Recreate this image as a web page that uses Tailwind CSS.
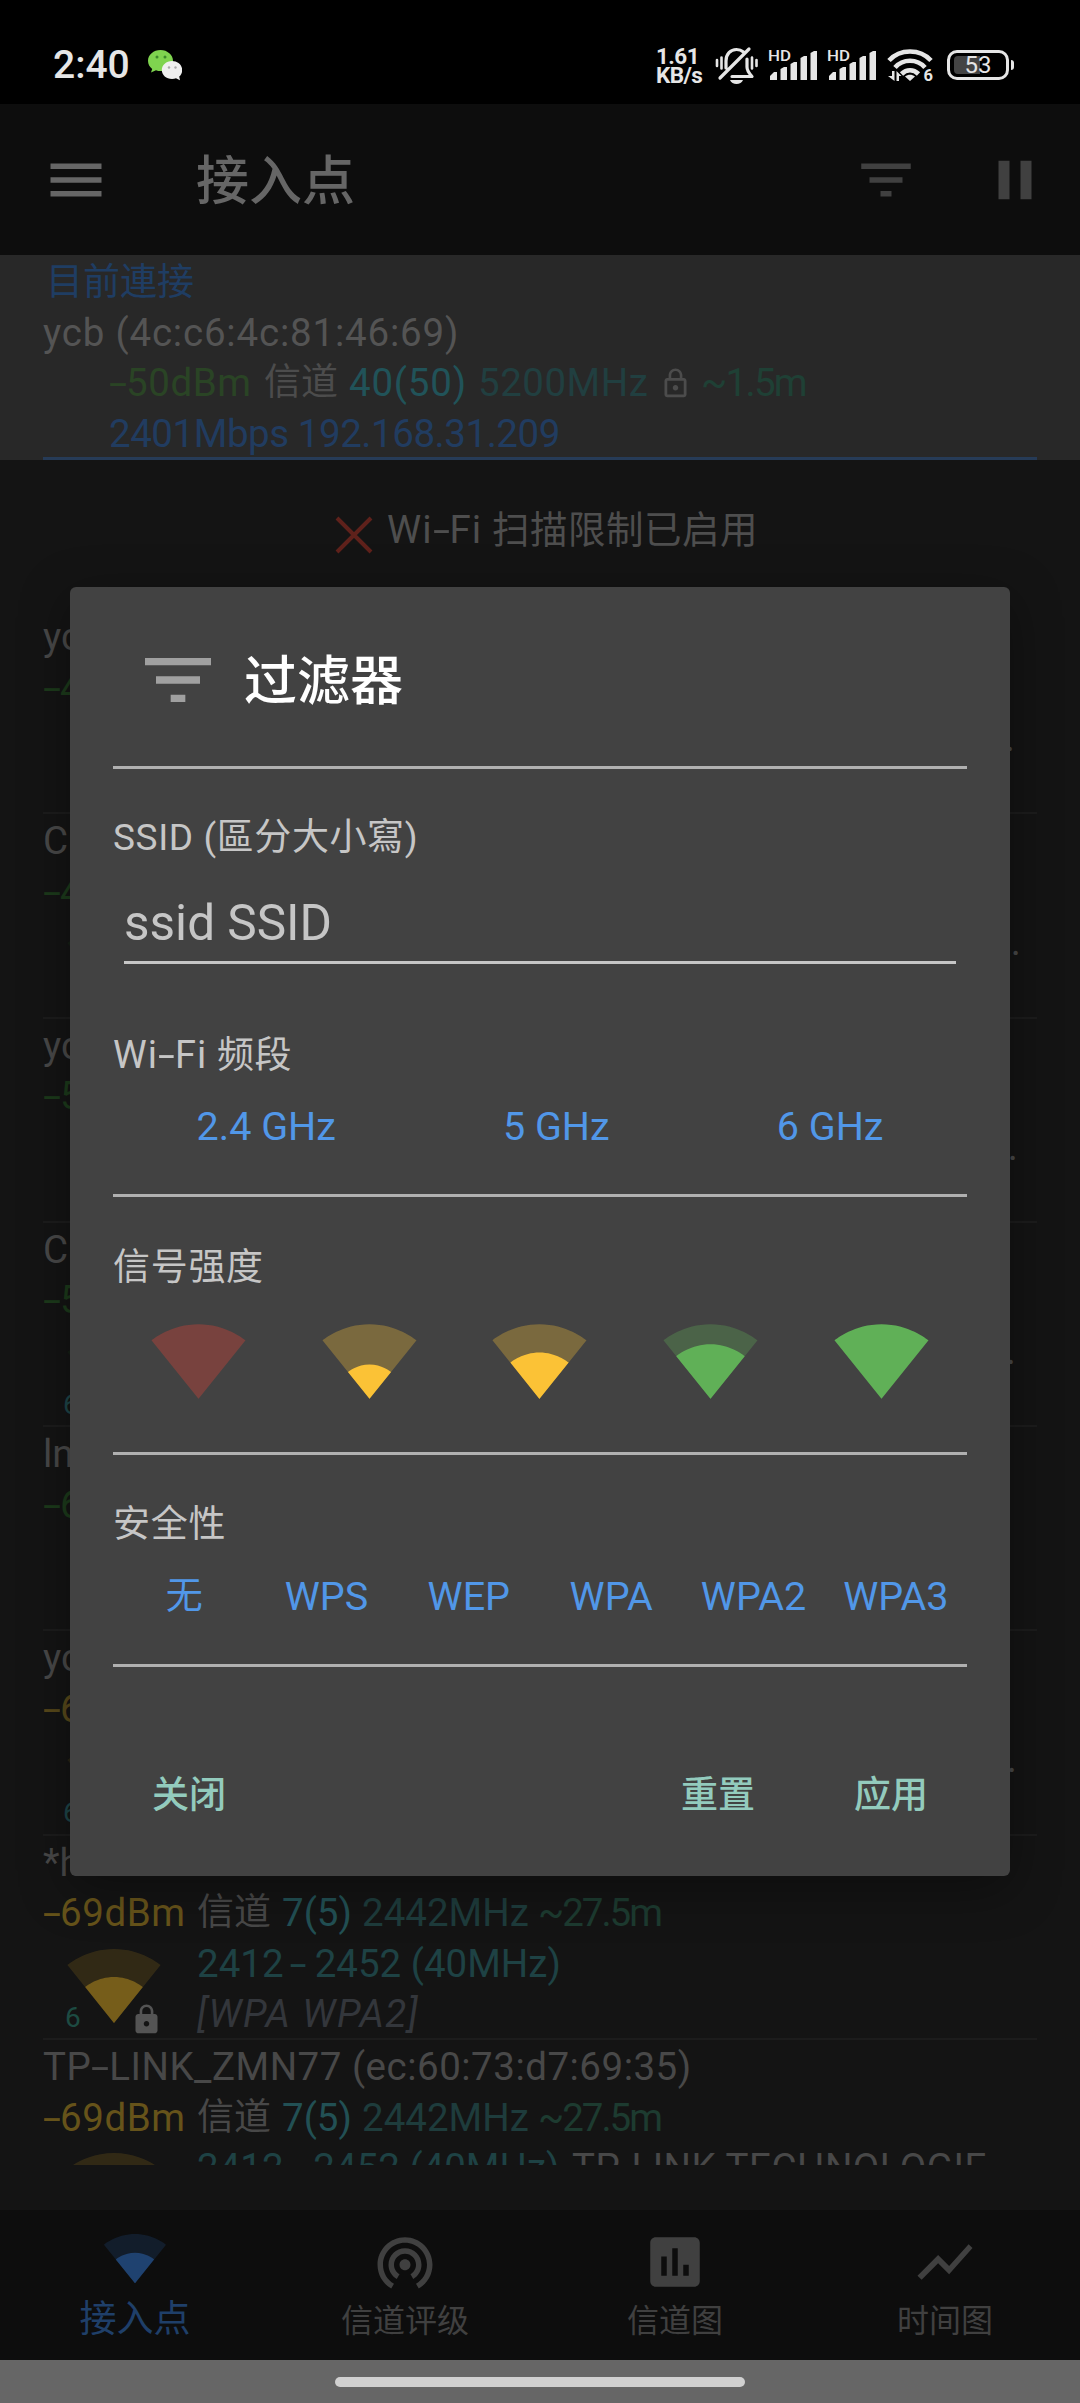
<!DOCTYPE html>
<html lang="zh">
<head>
    <meta charset="UTF-8">
    <meta name="viewport" content="width=device-width, initial-scale=1.0">
    <title>接入点</title>
    <script src="https://cdn.jsdelivr.net/npm/@tailwindcss/browser@4"></script>
</head>
<body class="bg-black">
    <!-- Shared icons -->
    <svg class="hidden">
        <symbol id="filter" viewBox="0 0 24 24"><path d="M10 18h4v-2h-4v2zM3 6v2h18V6H3zm3 7h12v-2H6v2z"/></symbol>
        <symbol id="wifi-full" viewBox="0 0 24 24"><path d="M12.01 21.49L23.64 7c-.45-.34-4.93-4-11.64-4C5.28 3 .81 6.66.36 7l11.63 14.49.01.01.01-.01z"/></symbol>
        <symbol id="wifi-1" viewBox="0 0 24 24"><path fill-opacity=".3" d="M12.01 21.49L23.64 7c-.45-.34-4.93-4-11.64-4C5.28 3 .81 6.66.36 7l11.63 14.49.01.01.01-.01z"/><path d="M6.67 14.86L12 21.49v.01l.01-.01 5.33-6.63C17.06 14.65 15.03 13 12 13s-5.06 1.65-5.33 1.86z"/></symbol>
        <symbol id="wifi-2" viewBox="0 0 24 24"><path fill-opacity=".3" d="M12.01 21.49L23.64 7c-.45-.34-4.93-4-11.64-4C5.28 3 .81 6.66.36 7l11.63 14.49.01.01.01-.01z"/><path d="M4.79 12.52l7.2 8.98H12l.01-.01 7.2-8.98C18.85 12.24 16.1 10 12 10s-6.85 2.24-7.21 2.52z"/></symbol>
        <symbol id="wifi-3" viewBox="0 0 24 24"><path fill-opacity=".3" d="M12.01 21.49L23.64 7c-.45-.34-4.93-4-11.64-4C5.28 3 .81 6.66.36 7l11.63 14.49.01.01.01-.01z"/><path d="M3.53 10.95l8.46 10.54.01.01.01-.01 8.46-10.54C20.04 10.62 16.81 8 12 8c-4.81 0-8.04 2.62-8.47 2.95z"/></symbol>
        <symbol id="lock" viewBox="0 0 24 24"><path d="M18 8h-1V6c0-2.76-2.24-5-5-5S7 3.24 7 6v2H6c-1.1 0-2 .9-2 2v10c0 1.1.9 2 2 2h12c1.1 0 2-.9 2-2V10c0-1.1-.9-2-2-2zm-6 9c-1.1 0-2-.9-2-2s.9-2 2-2 2 .9 2 2-.9 2-2 2zm3.1-9H8.9V6c0-1.71 1.39-3.1 3.1-3.1 1.71 0 3.1 1.39 3.1 3.1v2z"/></symbol>
        <symbol id="signal" viewBox="0 0 49 36">
            <text x="0" y="14" font-size="15.5" font-weight="500" textLength="23" lengthAdjust="spacingAndGlyphs">HD</text>
            <path d="M2 33v-4l4-4h3v8zM12.500 33V22l3.500-2h3v13zM22.500 33V17l3.500-2h3v18zM32.500 33V11l3.500-2h3v24zM42.500 33V6l3.500-2h3v29z"/>
        </symbol>
    </svg>

    <div class="relative flex flex-col w-[1080px] h-[2403px] overflow-hidden bg-[#141414] font-['Roboto','Noto_Sans_CJK_SC',sans-serif] text-[38.500px] leading-[50.5px] whitespace-nowrap">
        <!-- Status bar -->
        <div class="flex h-[104px] items-center bg-black pl-[53px] pr-[66px] pt-[25px] text-[#e6e6e6] fill-[#e6e6e6]">
            <span class="pt-[2px] text-[39px] font-medium">2:40</span>
            <svg class="ml-[18px] w-[34px] h-[32px]" viewBox="0 0 34 32">
                <path fill="#7fd44f" d="M12.500 1C5.600 1 0 5.800 0 11.700c0 3.500 1.700 6.300 4.200 8.200L3 23.500l5-2.200c1.500.6 3 .8 4.500.8C19.400 22.100 25 17.400 25 11.700S19.400 1 12.500 1z"/>
                <path fill="#efefef" d="M24 12c-5.700 0-10.200 4-10.200 9S18.300 30 24 30c1.500 0 2.900-.3 4-.8l4 2-.8-3.600c1.900-1.700 3-3.900 3-6.600 0-5-4.500-9-10.200-9z"/>
                <g fill="#3c8a2a"><circle cx="9" cy="8" r="1.500"/><circle cx="17" cy="8" r="1.500"/></g>
                <g fill="#aaa"><circle cx="21" cy="18.500" r="1.200"/><circle cx="27.500" cy="18.500" r="1.200"/></g>
            </svg>
            <div class="ml-auto flex items-center">
                <div class="w-[59px] pt-[3px] text-[22.500px] font-bold leading-[19px] tracking-tight">
                    <div>1.61</div>
                    <div>KB/s</div>
                </div>
                <svg class="w-[43px] h-[38px]" viewBox="0 0 43 38" fill="none" stroke="#e6e6e6" stroke-width="3.200" stroke-linecap="round" stroke-linejoin="round">
                    <path d="M34 3L5 32M11 22V15C11 8 15.500 3.500 21.500 3.500c3 0 5 .8 7 2.500M32 13v8c0 4 2 6 5 9.500H17"/>
                    <path stroke-width="2.600" d="M6.500 11.500v11M2 14v6M37 11.500v11M41.500 14v6"/>
                    <path fill="#e6e6e6" stroke="none" d="M15 34h13c-1 2.500-3.500 4-6.500 4S16 36.500 15 34z"/>
                </svg>
                <svg class="ml-[10px] w-[49px] h-[36px]"><use href="#signal"/></svg>
                <svg class="ml-[10px] w-[49px] h-[36px]"><use href="#signal"/></svg>
                <svg class="ml-[11px] w-[47px] h-[36px]" viewBox="0 0 47 36">
                    <g fill="none" stroke="#e6e6e6" stroke-width="4.600">
                        <path d="M2 13.500C13 1.500 33 1.500 44 13.500M8 20.500c8-9 22-9 30 0M14.500 27c5-5 12-5 17 0"/>
                    </g>
                    <path d="M23 34l-5-4.500c3-2.500 7-2.500 10 0zM5 24h2.500v10L1 29h4zM9.500 34V24l5 5H12v5z"/>
                    <text x="36.500" y="34" font-size="16.500" font-weight="700">6</text>
                </svg>
                <div class="ml-[13px] flex items-center">
                    <div class="relative flex w-[62px] h-[30px] items-center justify-center rounded-[10px] border-[3px] border-[#e6e6e6] text-[24px] leading-none">
                        <div class="absolute left-[4px] top-[3px] h-[18px] w-[26px] rounded-l-[4px] bg-[#444]"></div>
                        <span class="relative">53</span>
                    </div>
                    <div class="ml-[2px] w-[3px] h-[10px] rounded-r bg-[#e6e6e6]"></div>
                </div>
            </div>
        </div>

        <!-- Toolbar -->
        <div class="flex h-[151px] items-center bg-[#0d0d0d] pl-[42px] pr-8">
            <svg class="w-[68px] h-[66px] fill-[#666]" viewBox="0 0 24 24" preserveAspectRatio="none"><path d="M3 18h18v-2H3v2zm0-5h18v-2H3v2zm0-7v2h18V6H3z"/></svg>
            <h1 class="ml-[86px] pt-[5px] text-[53px] font-medium text-[#666]">接入点</h1>
            <svg class="ml-auto w-[66px] h-[66px] fill-[#404040]"><use href="#filter"/></svg>
            <svg class="ml-[63px] w-[66px] h-[66px] fill-[#404040]" viewBox="0 0 24 24"><path d="M6 19h4V5H6v14zm8-14v14h4V5h-4z"/></svg>
        </div>

        <!-- Current connection -->
        <div class="h-[205px] bg-[#282828] px-[43px] text-[#545454]">
            <div class="h-full border-b-3 border-[#263b57] pt-[2px]">
                <div class="pl-[3px] pt-px -mb-px text-[37px] text-[#1f3d63]">目前連接</div>
                <div class="tracking-[0.8px]">ycb (4c:c6:4c:81:46:69)</div>
                <div class="flex items-center pl-[66px]">
                    <span class="w-[155px] text-[#2a4425] tracking-[0.6px]"><span class="inline-block w-[17px] origin-left scale-x-170">-</span>50dBm</span>
                    <span class="w-[85px] text-[37px] text-[#4c4c4c]">信道</span>
                    <span class="w-[129px] text-[#215359] tracking-[0.8px]">40(50)</span>
                    <span class="w-[181px] text-[#213f40] tracking-[0.5px]">5200MHz</span>
                    <svg class="w-[33px] h-[33px] fill-[#4c4c4c]" viewBox="0 0 24 24"><path d="M12 17c1.100 0 2-.9 2-2s-.9-2-2-2-2 .9-2 2 .9 2 2 2zm6-9h-1V6c0-2.760-2.240-5-5-5S7 3.240 7 6v2H6c-1.100 0-2 .9-2 2v10c0 1.100.9 2 2 2h12c1.100 0 2-.9 2-2V10c0-1.100-.9-2-2-2zM8.900 6c0-1.710 1.390-3.100 3.100-3.100s3.100 1.390 3.100 3.100v2H8.900V6zM18 20H6V10h12v10z"/></svg>
                    <span class="ml-[9px] text-[#1f4035] tracking-[-1.700px]">~1.5m</span>
                </div>
                <div class="pl-[66px] text-[#213c60] tracking-[-0.450px]">2401Mbps 192.168.31.209</div>
            </div>
        </div>

        <!-- Scan warning -->
        <div class="flex h-[150px] items-center pl-[335px] pb-3 text-[#4e4e4e]">
            <svg class="mt-3 w-[38px] h-[38px]" viewBox="0 0 38 38"><path fill="none" stroke="#5f211b" stroke-width="4" d="M2 2l34 34M36 2L2 36"/></svg>
            <span class="ml-[14px] pt-[3px] text-[37.500px] tracking-[0.5px]"><span class="text-[38.500px] tracking-[1px]">Wi<span class="inline-block w-[17px] origin-left scale-x-160">-</span>Fi</span> 扫描限制已启用</span>
        </div>

        <!-- Access points -->
        <div class="h-[1555px] overflow-hidden px-[43px] text-[#484848]">
            <div class="h-[204.300px] border-b-2 border-[#1c1c1c] pt-[2px]">
                <div>yc</div>
                <div class="text-[#1c3a1b]"><span class="inline-block w-[17px] origin-left scale-x-170">-</span>4</div>
                <div class="text-right pr-[22px]">.</div>
            </div>
            <div class="h-[204.300px] border-b-2 border-[#1c1c1c] pt-[2px]">
                <div>C</div>
                <div class="text-[#1c3a1b]"><span class="inline-block w-[17px] origin-left scale-x-170">-</span>4</div>
                <div class="flex justify-between pl-[23px] pr-[16px]"><svg class="-mt-[2px] w-24 h-24 fill-[#1c3a1b]"><use href="#wifi-3"/></svg><span>.</span></div>
            </div>
            <div class="h-[204.300px] border-b-2 border-[#1c1c1c] pt-[2px]">
                <div>yc</div>
                <div class="text-[#1c3a1b]"><span class="inline-block w-[17px] origin-left scale-x-170">-</span>5</div>
                <div class="text-right pr-[19px]">.</div>
            </div>
            <div class="h-[204.300px] border-b-2 border-[#1c1c1c] pt-[2px]">
                <div>C</div>
                <div class="text-[#1c3a1b]"><span class="inline-block w-[17px] origin-left scale-x-170">-</span>5</div>
                <div class="relative flex justify-between pl-[23px] pr-[21px]"><svg class="-mt-[2px] w-24 h-24 fill-[#1c3a1b]"><use href="#wifi-3"/></svg><span>.</span><span class="absolute left-[20px] top-[54px] text-[28px] text-[#1e4548]">6</span></div>
            </div>
            <div class="h-[204.300px] border-b-2 border-[#1c1c1c] pt-[2px]">
                <div>ln</div>
                <div class="text-[#1c3a1b]"><span class="inline-block w-[17px] origin-left scale-x-170">-</span>6</div>
            </div>
            <div class="h-[204.300px] border-b-2 border-[#1c1c1c] pt-[2px]">
                <div>yc</div>
                <div class="text-[#57481a]"><span class="inline-block w-[17px] origin-left scale-x-170">-</span>6</div>
                <div class="relative flex justify-between pl-[23px] pr-[20px]"><svg class="-mt-[2px] w-24 h-24 fill-[#57481a]"><use href="#wifi-2"/></svg><span>.</span><span class="absolute left-[20px] top-[54px] text-[28px] text-[#1e4548]">6</span></div>
            </div>
            <div class="h-[204.300px] border-b-2 border-[#1c1c1c] pt-[2px]">
                <div>*h</div>
                <div class="flex">
                    <span class="w-[154px] text-[#66531a] tracking-[0.6px]"><span class="inline-block w-[17px] origin-left scale-x-170">-</span>69dBm</span>
                    <span class="w-[85px] text-[37px]">信道</span>
                    <span class="w-[80px] text-[#225054]">7(5)</span>
                    <span class="w-[176px] text-[#1e3c3c]">2442MHz</span>
                    <span class="text-[#1d3b30] tracking-[-2px]">~27.5m</span>
                </div>
                <div class="relative flex pl-[23px]">
                    <svg class="-mt-[2px] w-24 h-24 fill-[#765d1a]"><use href="#wifi-2"/></svg>
                    <span class="absolute left-[22px] top-[54px] text-[28px] text-[#1d4b42]">6</span>
                    <svg class="absolute left-[87px] top-[64px] w-[33px] h-[33px] fill-[#545454]"><use href="#lock"/></svg>
                    <div class="ml-[35px]">
                        <div class="text-[#1e4244]">2412 <span class="inline-block w-[12px] origin-center scale-x-160">-</span> 2452 (40MHz)</div>
                        <div class="italic text-[#33363b] tracking-[1.500px]">[WPA WPA2]</div>
                    </div>
                </div>
            </div>
            <div class="pt-[2px]">
                <div class="tracking-[0.5px]">TP<span class="inline-block w-[18px] origin-left scale-x-170">-</span>LINK_ZMN77 (ec:60:73:d7:69:35)</div>
                <div class="flex">
                    <span class="w-[154px] text-[#66531a] tracking-[0.6px]"><span class="inline-block w-[17px] origin-left scale-x-170">-</span>69dBm</span>
                    <span class="w-[85px] text-[37px]">信道</span>
                    <span class="w-[80px] text-[#225054]">7(5)</span>
                    <span class="w-[176px] text-[#1e3c3c]">2442MHz</span>
                    <span class="text-[#1d3b30] tracking-[-2px]">~27.5m</span>
                </div>
                <div class="flex pl-[23px]">
                    <svg class="-mt-[2px] w-24 h-24 fill-[#765d1a]"><use href="#wifi-2"/></svg>
                    <div class="ml-[35px]"><span class="inline-block w-[375px] text-[#1e4244]">2412 - 2452 (40MHz)</span><span class="tracking-[0.5px]">TP-LINK TECHNOLOGIE</span></div>
                </div>
            </div>
        </div>

        <!-- Bottom navigation -->
        <div class="mt-[45px] grid h-[150px] grid-cols-4 bg-[#0d0d0d] pt-[19px] text-[32px] text-[#404040] fill-[#404040]">
            <div class="flex flex-col items-center text-[#1f3f69] fill-[#1f4270]">
                <svg class="w-[64px] h-[66px] -mt-1"><use href="#wifi-2"/></svg>
                <span class="text-[37px] mt-[4px]">接入点</span>
            </div>
            <div class="flex flex-col items-center">
                <svg class="w-[66px] h-[66px]" viewBox="0 0 24 24"><path d="M12 11c-1.100 0-2 .9-2 2s.9 2 2 2 2-.9 2-2-.9-2-2-2zm6 2c0-3.310-2.690-6-6-6s-6 2.690-6 6c0 2.220 1.210 4.150 3 5.190l1-1.740c-1.190-.7-2-1.970-2-3.450 0-2.210 1.790-4 4-4s4 1.790 4 4c0 1.480-.81 2.750-2 3.450l1 1.740c1.790-1.040 3-2.970 3-5.190zM12 3C6.480 3 2 7.480 2 13c0 3.700 2.010 6.920 4.990 8.650l1-1.730C5.610 18.530 4 15.960 4 13c0-4.420 3.580-8 8-8s8 3.580 8 8c0 2.960-1.610 5.530-4 6.920l1 1.730c2.990-1.730 5-4.950 5-8.650 0-5.520-4.480-10-10-10z"/></svg>
                <span class="mt-px">信道评级</span>
            </div>
            <div class="flex flex-col items-center">
                <svg class="w-[66px] h-[66px]" viewBox="0 0 24 24"><path d="M19 3H5c-1.100 0-2 .9-2 2v14c0 1.100.9 2 2 2h14c1.100 0 2-.9 2-2V5c0-1.100-.9-2-2-2zM9 17H7v-7h2v7zm4 0h-2V7h2v10zm4 0h-2v-4h2v4z"/></svg>
                <span class="mt-px">信道图</span>
            </div>
            <div class="flex flex-col items-center">
                <svg class="w-[66px] h-[66px]" viewBox="0 0 24 24"><path d="M3.500 18.490l6-6.010 4 4L22 6.920l-1.410-1.410-7.090 7.970-4-4L2 16.990z"/></svg>
                <span class="mt-px">时间图</span>
            </div>
        </div>

        <!-- Gesture bar -->
        <div class="flex h-[43px] items-center justify-center bg-[#666]">
            <div class="h-[10px] w-[410px] rounded-full bg-[#d0d0d0]"></div>
        </div>

        <!-- Filter dialog -->
        <div class="absolute left-[70px] top-[587px] flex h-[1289px] w-[940px] flex-col rounded-[6px] bg-[#424242] px-[43px] text-[37px] text-[#c6c6c6] shadow-[0_12px_50px_rgba(0,0,0,0.35)]">
            <div class="flex h-[179px] items-center pl-[21px] pt-[7px]">
                <svg class="w-[88px] h-[88px] fill-[#a0a0a0]"><use href="#filter"/></svg>
                <h2 class="ml-[22px] pt-[4px] text-[53px] font-medium text-white">过滤器</h2>
            </div>
            <div class="h-[3px] bg-[#b0b0b0]"></div>
            <div class="mt-[44px] tracking-[0.600px]">SSID (區分大小寫)</div>
            <div class="mx-[11px] mt-[22px] h-[78px] border-b-3 border-[#c6c6c6] pt-[12px] text-[49.500px]">ssid SSID</div>

            <div class="mt-[66px] tracking-[0.500px]"><span class="text-[38px] tracking-[1px]">Wi<span class="inline-block w-[17px] origin-left scale-x-160">-</span>Fi</span> 频段</div>
            <div class="mt-[21px] flex text-center text-[39.500px] text-[#5197e8]">
                <button class="flex-auto">2.4 GHz</button>
                <button class="flex-auto">5 GHz</button>
                <button class="flex-auto">6 GHz</button>
            </div>
            <div class="mt-[41px] h-[3px] shrink-0 bg-[#b0b0b0]"></div>

            <div class="mt-[46px] tracking-[0.700px]">信号强度</div>
            <div class="mt-[19px] grid grid-cols-5 justify-items-center">
                <svg class="w-[97px] h-[97px] fill-[#f44336]/30"><use href="#wifi-full"/></svg>
                <svg class="w-[97px] h-[97px] fill-[#fbc236]"><use href="#wifi-1"/></svg>
                <svg class="w-[97px] h-[97px] fill-[#fbc236]"><use href="#wifi-2"/></svg>
                <svg class="w-[97px] h-[97px] fill-[#60b057]"><use href="#wifi-3"/></svg>
                <svg class="w-[97px] h-[97px] fill-[#60b057]"><use href="#wifi-full"/></svg>
            </div>
            <div class="mt-[43px] h-[3px] shrink-0 bg-[#b0b0b0]"></div>

            <div class="mt-[45px] tracking-[0.700px]">安全性</div>
            <div class="mt-[21px] grid grid-cols-6 text-center text-[39.500px] text-[#5197e8]">
                <button class="text-[37px]">无</button>
                <button>WPS</button>
                <button>WEP</button>
                <button>WPA</button>
                <button>WPA2</button>
                <button>WPA3</button>
            </div>
            <div class="mt-[42px] h-[3px] shrink-0 bg-[#b0b0b0]"></div>

            <div class="mt-[104px] flex px-[39px] font-medium text-[#93cbbd]">
                <button>关闭</button>
                <button class="ml-auto">重置</button>
                <button class="ml-[99px]">应用</button>
            </div>
        </div>
    </div>
</body>
</html>
